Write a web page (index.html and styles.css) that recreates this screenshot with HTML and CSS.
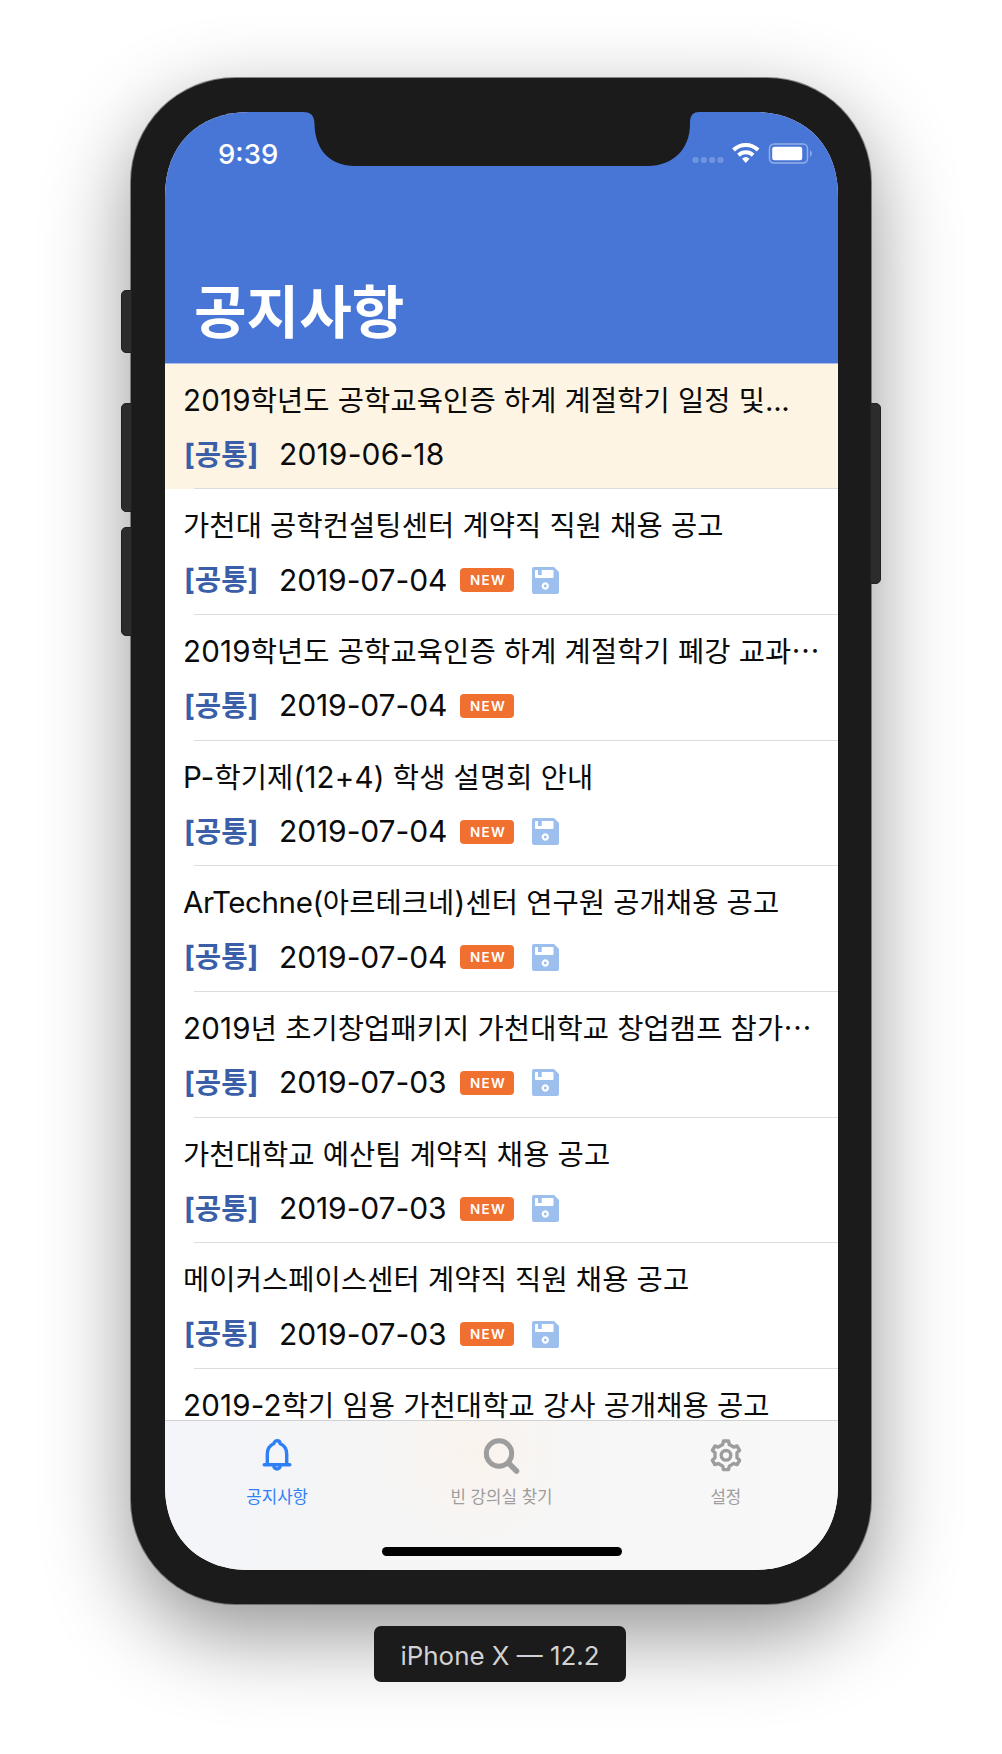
FILE: index.html
```html
<!DOCTYPE html>
<html lang="ko">
<head>
<meta charset="utf-8">
<title>공지사항</title>
<link rel="stylesheet" href="styles.css">
</head>
<body>
<svg class="defs" width="0" height="0" aria-hidden="true">
  <symbol id="disk" viewBox="0 0 27 27">
    <path fill="#9dbfee" fill-rule="evenodd" d="M2 0H22L27 5V25a2 2 0 0 1-2 2H2a2 2 0 0 1-2-2V2a2 2 0 0 1 2-2ZM4 3a1 1 0 0 0-1 1v6a1 1 0 0 0 1 1H20.500a1 1 0 0 0 1-1V4a1 1 0 0 0-1-1H9.700V8H6V3ZM13.300 15.300a3.700 3.700 0 1 0 .01 0ZM13.300 17.600a1.400 1.400 0 1 1-.01 0Z"/>
  </symbol>
</svg>
<main class="stage">
  <div class="phone">
    <i class="key mute"></i><i class="key up"></i><i class="key down"></i><i class="key power"></i>
    <div class="screen">
      <header class="header">
        <div class="status">
          <span class="time">9:39</span>
          <svg class="indicators" width="121" height="24" viewBox="0 0 121 24">
            <g fill="#fff" fill-opacity=".22"><rect x=".5" y="15" width="6" height="6" rx="2.500"/><rect x="8.800" y="15" width="6" height="6" rx="2.500"/><rect x="17.200" y="15" width="6" height="6" rx="2.500"/><rect x="25.500" y="15" width="6" height="6" rx="2.500"/></g>
            <g fill="none" stroke="#fff" stroke-width="4"><path d="M41.500 8a17.600 17.600 0 0 1 24.600 0"/><path d="M46.500 13.200a10.800 10.800 0 0 1 14.600 0"/></g>
            <path fill="#fff" d="M50.100 16.700a5.600 5.600 0 0 1 7.400 0L53.800 21Z"/>
            <rect x="77.500" y="2" width="38" height="19" rx="4.500" fill="none" stroke="#fff" stroke-opacity=".42" stroke-width="1.500"/>
            <rect x="80.200" y="4.700" width="30" height="13.500" rx="2.200" fill="#fff"/>
            <path fill="#fff" fill-opacity=".5" d="M118.200 8.100q3 3.400 0 6.800Z"/>
          </svg>
        </div>
        <h1 class="page-title">공지사항</h1>
      </header>
      <ul class="list">
        <li class="row pinned"><div class="title"><b>2019</b>학년도 공학교육인증 하계 계절학기 일정 및<b class="word">...</b></div><div class="meta"><span class="tag">[공통]</span><span class="date">2019-06-18</span></div></li>
        <li class="row"><div class="title">가천대 공학컨설팅센터 계약직 직원 채용 공고</div><div class="meta"><span class="tag">[공통]</span><span class="date">2019-07-04</span><span class="new">NEW</span><svg class="disk"><use href="#disk"/></svg></div></li>
        <li class="row"><div class="title"><b>2019</b>학년도 공학교육인증 하계 계절학기 폐강 교과⋯</div><div class="meta"><span class="tag">[공통]</span><span class="date">2019-07-04</span><span class="new">NEW</span></div></li>
        <li class="row"><div class="title"><b>P-</b>학기제<b>(12+4)</b> 학생 설명회 안내</div><div class="meta"><span class="tag">[공통]</span><span class="date">2019-07-04</span><span class="new">NEW</span><svg class="disk"><use href="#disk"/></svg></div></li>
        <li class="row"><div class="title"><b class="word">ArTechne(</b>아르테크네<b>)</b>센터 연구원 공개채용 공고</div><div class="meta"><span class="tag">[공통]</span><span class="date">2019-07-04</span><span class="new">NEW</span><svg class="disk"><use href="#disk"/></svg></div></li>
        <li class="row"><div class="title"><b>2019</b>년 초기창업패키지 가천대학교 창업캠프 참가⋯</div><div class="meta"><span class="tag">[공통]</span><span class="date">2019-07-03</span><span class="new">NEW</span><svg class="disk"><use href="#disk"/></svg></div></li>
        <li class="row"><div class="title">가천대학교 예산팀 계약직 채용 공고</div><div class="meta"><span class="tag">[공통]</span><span class="date">2019-07-03</span><span class="new">NEW</span><svg class="disk"><use href="#disk"/></svg></div></li>
        <li class="row"><div class="title">메이커스페이스센터 계약직 직원 채용 공고</div><div class="meta"><span class="tag">[공통]</span><span class="date">2019-07-03</span><span class="new">NEW</span><svg class="disk"><use href="#disk"/></svg></div></li>
        <li class="row"><div class="title"><b>2019-2</b>학기 임용 가천대학교 강사 공개채용 공고</div></li>
      </ul>
      <nav class="tabs">
        <a class="tab active">
          <svg width="36" height="40" viewBox="0 0 36 40" fill="none" stroke="currentColor" stroke-width="3.400" stroke-linecap="round" stroke-linejoin="round"><path d="M5.200 29.800H30.800M8.300 29.500V19C8.300 13.500 11 10.300 15 8.500C15 4.900 21 4.900 21 8.500C25 10.300 27.700 13.500 27.700 19V29.500M14.800 30.800a3.200 3.200 0 0 0 6.400 0"/></svg>
          <span>공지사항</span>
        </a>
        <a class="tab">
          <svg width="40" height="40" viewBox="0 0 40 40" fill="none" stroke="currentColor" stroke-linecap="round"><circle cx="18" cy="18.500" r="12.700" stroke-width="5"/><path stroke-width="5.500" d="M28 28.500L35.500 36"/></svg>
          <span>빈 강의실 찾기</span>
        </a>
        <a class="tab">
          <svg width="36" height="40" viewBox="0 0 36 40" fill="none" stroke="currentColor" stroke-width="3.400" stroke-linejoin="round"><circle cx="18" cy="20.300" r="4.800"/><path transform="translate(18 20.300)" d="M-2.500-14.300H2.500L3.300-10.800L7.700-8.260L11.100-9.300L13.600-5L11-2.540V2.540L13.600 5L11.100 9.300L7.700 8.260L3.300 10.800L2.500 14.300H-2.500L-3.300 10.800L-7.700 8.260L-11.100 9.300L-13.600 5L-11 2.540V-2.540L-13.600-5L-11.100-9.300L-7.700-8.260L-3.300-10.800Z"/></svg>
          <span>설정</span>
        </a>
        <i class="home"></i>
      </nav>
      <svg class="notch" width="400" height="54" viewBox="0 0 400 54"><path fill="#1b1b1b" d="M0-1H400V0H398Q389.500 0 389 9V12C389 38 371 54 347 54H54C29 54 14 38 13.500 12C13.200 4 10.500 0 2 0H0Z"/></svg>
    </div>
  </div>
  <div class="device">iPhone X — 12.2</div>
</main>
</body>
</html>
```
FILE: styles.css
```css
* { box-sizing: border-box; }
body { margin: 0; background: #fff; font-family: Inter, "Noto Sans CJK KR", sans-serif; color: #0b0b0b; }
.defs { position: absolute; }
.stage { height: 1754px; overflow: hidden; padding-top: 78px; display: flex; flex-direction: column; align-items: center; gap: 22px; }
.phone { position: relative; width: 740px; height: 1526px; padding: 34px 33px 34px 34px; border-radius: 104px; background: #1b1b1b; box-shadow: 0 0 0 1px rgba(70,70,70,.6), 0 30px 85px rgba(0,0,0,.43); }
.key { position: absolute; width: 11px; left: -10px; background: #2c2c2c; border: 1px solid #202020; border-radius: 5px 0 0 5px; }
.mute { top: 212px; height: 63px; }
.up { top: 325px; height: 109px; }
.down { top: 449px; height: 109px; }
.power { top: 325px; height: 181px; left: auto; right: -10px; border-radius: 0 5px 5px 0; }
.screen { position: relative; width: 673px; height: 1458px; overflow: hidden; background: #fff; display: flex; flex-direction: column;
  clip-path: path("M0 84C0 33 33 0 84 0H589C640 0 673 33 673 84V1374C673 1425 640 1458 589 1458H84C33 1458 0 1425 0 1374Z"); }
.header { flex: none; height: 251.500px; background: #4876d6; color: #fff; border-bottom: 1px solid #a9bfe8; display: flex; flex-direction: column; justify-content: space-between; }
.status { display: flex; justify-content: space-between; align-items: center; padding: 28px 25px 0 53px; }
.time { font-size: 27.500px; font-weight: 500; line-height: 28px; }
.indicators { display: block; }
.page-title { margin: 0; padding: 0 0 10px 29px; font-size: 57.200px; font-weight: 700; line-height: 80px; }
.list { list-style: none; margin: 0; padding: 0; flex: 1; min-height: 0; overflow: hidden; }
.row { height: 125.700px; padding: 11px 0 0 18px; background: linear-gradient(#dcdcdc, #dcdcdc) 29px 100% / 100% 1px no-repeat; }
.pinned { background-color: #fdf4e3; }
.title { font-size: 28.500px; line-height: 51px; height: 51px; white-space: nowrap; letter-spacing: .1px; }
.title b { font-weight: 400; font-size: 29.500px; line-height: 0; letter-spacing: .2px; }
.title .word { letter-spacing: -.4px; }
.meta { display: flex; align-items: center; height: 58px; padding-left: 1px; }
.tag { width: 95px; padding-bottom: 5px; font-size: 28.700px; font-weight: 700; color: #3b5ea8; }
.date { width: 181px; padding-bottom: 1px; font-size: 30px; letter-spacing: -.1px; }
.pinned .date { letter-spacing: .15px; }
.new { width: 54px; height: 24px; border-radius: 4px; background: #f07030; color: #fff; font-size: 13.500px; font-weight: 600; letter-spacing: 1.200px; line-height: 25px; text-align: center; padding-left: 2px; }
.disk { width: 27px; height: 27px; margin-left: 18px; }
.tabs { position: relative; flex: none; height: 150px; border-top: 1px solid #d2d2d2; padding-top: 14px; display: grid; grid-template-columns: repeat(3, 1fr);
  background: radial-gradient(circle at 46% 20%, #faf3ed 0, rgba(250,243,237,0) 100px), linear-gradient(90deg, #f3f5fa, #f5f5f5 30%, #f8f8f8); }
.tab { display: flex; flex-direction: column; align-items: center; color: #9d9d9d; font-size: 16.800px; }
.tab.active { color: #2f80f7; }
.tab svg { display: block; }
.tab span { line-height: 24px; margin-top: 10px; }
.home { position: absolute; left: 217px; bottom: 14px; width: 240px; height: 9px; border-radius: 5px; background: #000; }
.notch { position: absolute; left: 136px; top: 0; }
.device { width: 252px; height: 56px; margin-right: 2px; border-radius: 7px; background: #1b1b1b; color: #d2d2d2; font-size: 25.900px; line-height: 59px; text-align: center; white-space: nowrap; position: relative; }
```
